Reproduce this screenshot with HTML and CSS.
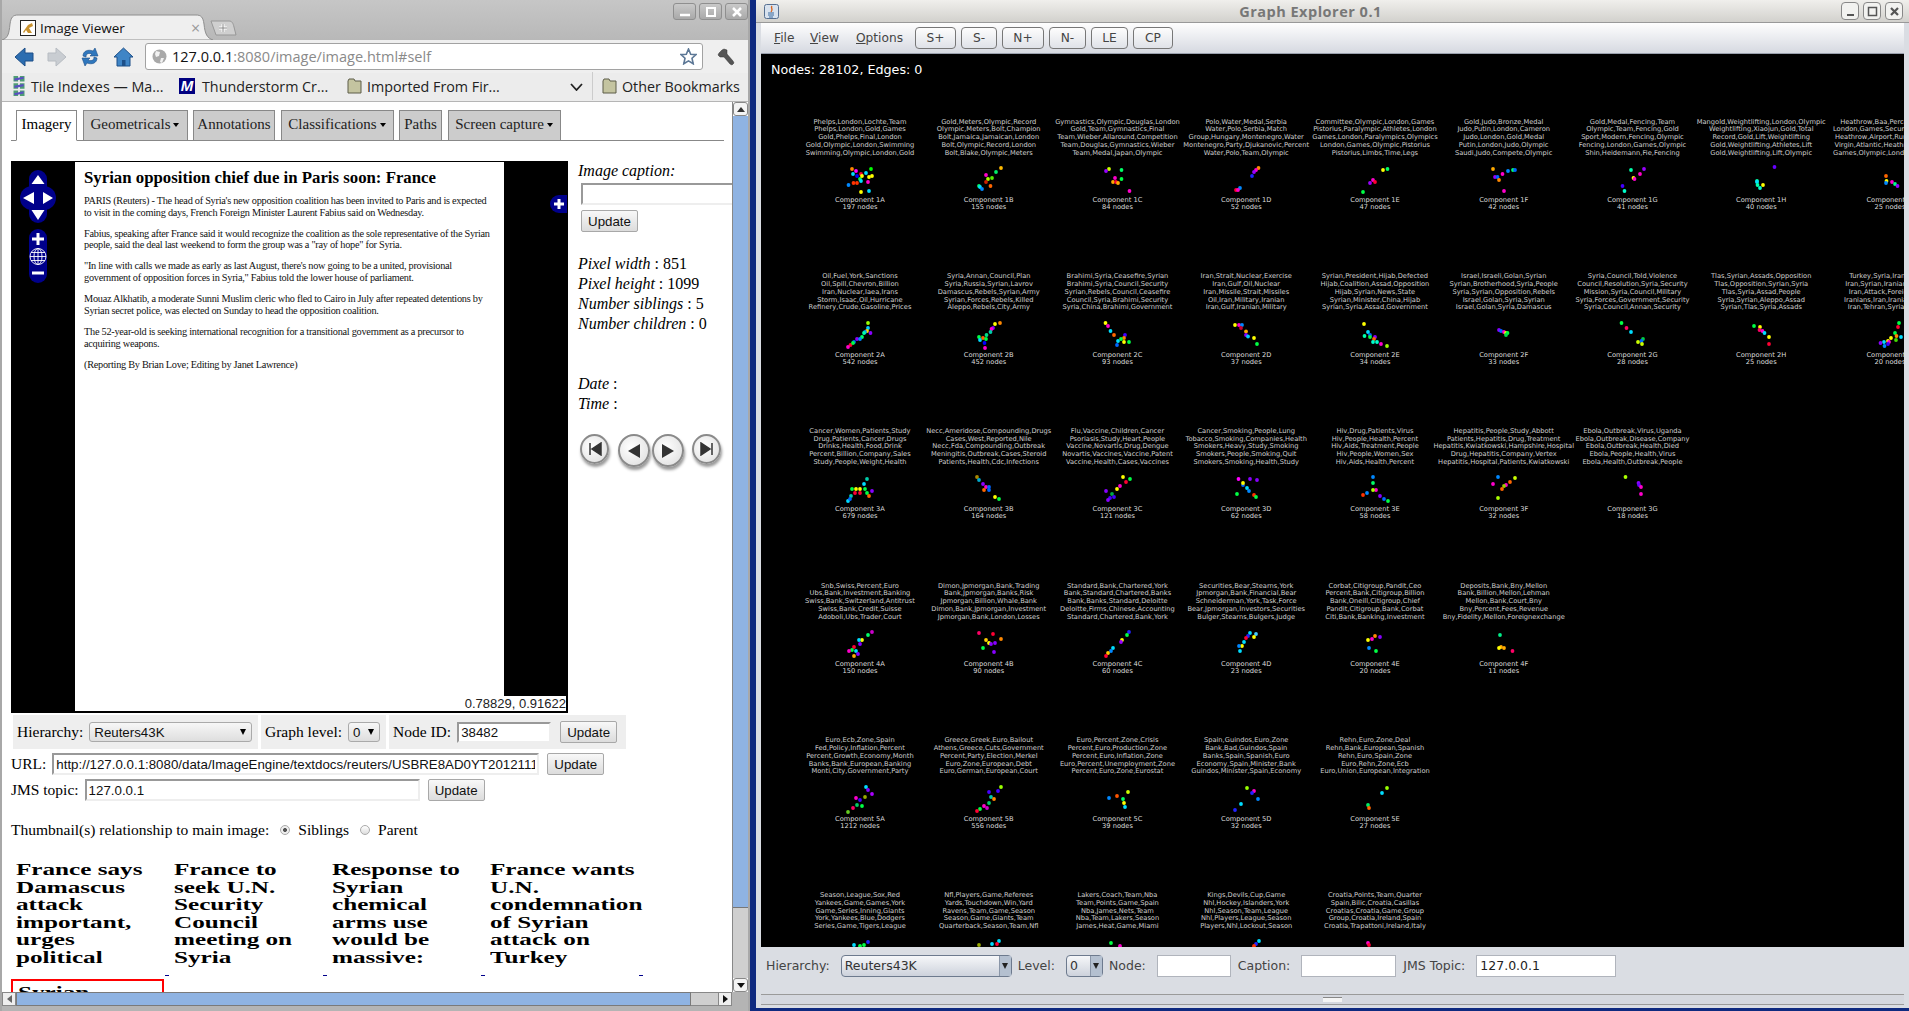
FILE: index.html
```html
<!DOCTYPE html>
<html lang="en">
<head>
    <meta charset="UTF-8">
    <title>Image Viewer / Graph Explorer</title>
    <link rel="stylesheet" href="styles.css">
</head>
<body>
    <!-- Browser window -->
    <div class="browser">
        <div class="tabstrip">
            <svg class="tab-shape" width="240" height="40" viewBox="0 0 240 40"><path d="M2 40C8 38 9 34 10 24C11 17 13 15 18 15H196C201 15 203 17 204 24C205 34 207 38 213 40Z" fill="#efefef" stroke="#8e8e8e"/><path d="M211 21H229C232 21 233 23 234 27L236 35H216Z" fill="#cfcfcf" stroke="#979797"/><path d="M223 24V32M219 28H227" stroke="#fff" stroke-width="3"/><path d="M223 24V32M219 28H227" stroke="#888" stroke-width="1"/></svg>
            <div class="tab-label">
                <svg width="16" height="16" viewBox="0 0 16 16"><rect x=".5" y=".5" width="15" height="15" fill="#fff" stroke="#222"/><path d="M3 12L8 5L12 3L13 6L9 8L12 13H8L6 10L4 13Z" fill="#c8912e"/></svg>
                <span>Image Viewer</span>
            </div>
            <span class="tab-close">×</span>
            <div class="win-buttons">
                <span class="win-btn"><svg width="12" height="12" viewBox="0 0 12 12"><path d="M1 9H11" stroke="#fff" stroke-width="2.5"/></svg></span>
                <span class="win-btn"><svg width="12" height="12" viewBox="0 0 12 12"><rect x="2" y="2" width="8" height="8" fill="none" stroke="#fff" stroke-width="2"/></svg></span>
                <span class="win-btn"><svg width="12" height="12" viewBox="0 0 12 12"><path d="M2 2L10 10M10 2L2 10" stroke="#fff" stroke-width="2.5"/></svg></span>
            </div>
        </div>
        <div class="toolbar">
            <svg class="tool-icon" width="20" height="20" viewBox="0 0 20 20"><path d="M1 10L11 1V6H19V14H11V19Z" fill="#2c6db0" stroke="#1d4f88"/></svg>
            <svg class="tool-icon" width="20" height="20" viewBox="0 0 20 20"><path d="M19 10L9 1V6H1V14H9V19Z" fill="#c9cdd2" stroke="#b7bcc2"/></svg>
            <svg class="tool-icon" width="20" height="20" viewBox="0 0 20 20"><path d="M3 9C3 4 8 2 13 4L15 1L18 9L10 9L12 7C9 6 6 6 6 10Z" fill="#2f77bd" stroke="#1d4f88" stroke-width=".6"/><path d="M17 11C17 16 12 18 7 16L5 19L2 11L10 11L8 13C11 14 14 14 14 10Z" fill="#2f77bd" stroke="#1d4f88" stroke-width=".6"/></svg>
            <svg class="tool-icon" width="21" height="20" viewBox="0 0 21 20"><path d="M10.500 1L20 10H17V19H4V10H1Z" fill="#3f85c6" stroke="#1d4f88"/><rect x="9" y="13" width="3.500" height="6" fill="#1d4f88"/></svg>
            <div class="urlbar">
                <svg width="15" height="15" viewBox="0 0 15 15"><circle cx="7.500" cy="7.500" r="7" fill="#a9a9a9"/><path d="M4 2L8 3L7 7L4 8L3 5ZM9 9L12 9L10 14L8 13Z" fill="#f2f2f2"/></svg>
                <span class="url-text"><b>127.0.0.1</b>:8080/image/image.html#self</span>
                <svg width="17" height="17" viewBox="0 0 17 17"><path d="M8.500 1L10.700 6.200L16 6.600L12 10.200L13.200 15.800L8.500 12.900L3.800 15.800L5 10.200L1 6.600L6.300 6.200Z" fill="#fff" stroke="#5d7896" stroke-width="1.600"/></svg>
            </div>
            <svg class="wrench" width="18" height="18" viewBox="0 0 18 18"><path d="M2 5L5 2L7 1L10 2L10 6L16 13L17 15L15 17L13 16L7 9L3 9L1 7Z" fill="#555" stroke="#333" stroke-width=".5"/></svg>
        </div>
        <div class="bookmarks">
            <span class="bookmark bookmark-tile">
                <svg width="14" height="24" viewBox="0 0 14 24"><path d="M1 1H6V7H1ZM8 1H13V7H8ZM1 9H6V15H1ZM8 9H13V15H8ZM1 17H6V23H1ZM8 17H13V23H8Z" fill="#4f9d74"/><path d="M2 5L12 3M2 13L12 11M2 21L12 19" stroke="#5a4fc2" stroke-width="2.500"/></svg>
                Tile Indexes — Ma...
            </span>
            <span class="bookmark bookmark-thunder"><i class="m-logo">M</i>Thunderstorm Cr...</span>
            <span class="bookmark bookmark-import">
                <svg class="folder" width="15" height="16" viewBox="0 0 15 16"><path d="M1 3V15H14V3H8L7 1H2Z" fill="#c4c4a0" stroke="#5c5c48"/></svg>
                Imported From Fir...
            </span>
            <svg class="chevron" width="13" height="8" viewBox="0 0 13 8"><path d="M1 1L6.500 7L12 1" fill="none" stroke="#222" stroke-width="1.800"/></svg>
            <span class="bookmark bookmark-other">
                <svg class="folder" width="15" height="16" viewBox="0 0 15 16"><path d="M1 3V15H14V3H8L7 1H2Z" fill="#c4c4a0" stroke="#5c5c48"/></svg>
                Other Bookmarks
            </span>
        </div>
        <div class="viewport">
            <div class="page">
                <div class="tabs">
                    <span class="tab tab-active tab-imagery">Imagery</span>
                    <span class="tab tab-geometricals">Geometricals<i class="caret"></i></span>
                    <span class="tab tab-annotations">Annotations</span>
                    <span class="tab tab-classifications">Classifications<i class="caret"></i></span>
                    <span class="tab tab-paths">Paths</span>
                    <span class="tab tab-capture">Screen capture<i class="caret"></i></span>
                </div>

                <div class="main-row">
                    <div class="image-pane">
                        <div class="article">
                            <h2>Syrian opposition chief due in Paris soon: France</h2>
                            <p>PARIS (Reuters) - The head of Syria's new opposition coalition has been invited to Paris and is expected<br>to visit in the coming days, French Foreign Minister Laurent Fabius said on Wednesday.</p>
                            <p>Fabius, speaking after France said it would recognize the coalition as the sole representative of the Syrian<br>people, said the deal last weekend to form the group was a "ray of hope" for Syria.</p>
                            <p>"In line with calls we made as early as last August, there's now going to be a united, provisional<br>government of opposition forces in Syria," Fabius told the lower house of parliament.</p>
                            <p>Mouaz Alkhatib, a moderate Sunni Muslim cleric who fled to Cairo in July after repeated detentions by<br>Syrian secret police, was elected on Sunday to head the opposition coalition.</p>
                            <p>The 52-year-old is seeking international recognition for a transitional government as a precursor to<br>acquiring weapons.</p>
                            <p>(Reporting By Brian Love; Editing by Janet Lawrence)</p>
                        </div>
                        <svg class="pan-control" width="36" height="113" viewBox="0 0 36 113">
                            <g fill="#00008b">
                                <rect x="9" y="0" width="18" height="53" rx="9"/>
                                <rect x="0" y="16" width="36" height="24" rx="12"/>
                                <rect x="9" y="59" width="18" height="54" rx="9"/>
                            </g>
                            <path d="M18 5L11.500 14H24.500ZM3 28L14 22V34ZM33 28L23 22V34ZM18 50L11.500 40H24.500Z" fill="#fff"/>
                            <path d="M12 69H24M18 63V75M12 103H24" stroke="#fff" stroke-width="3"/>
                            <g fill="none" stroke="#fff" stroke-width=".9">
                                <circle cx="18" cy="86.500" r="8"/>
                                <ellipse cx="18" cy="86.500" rx="4" ry="8"/>
                                <path d="M18 78.500V94.500M10 86.500H26M11 82.500H25M11 90.500H25"/>
                            </g>
                        </svg>
                        <span class="expand-btn"><svg width="12" height="12" viewBox="0 0 12 12"><path d="M1 6H11M6 1V11" stroke="#fff" stroke-width="3"/></svg></span>
                        <span class="coords">0.78829, 0.91622</span>
                    </div>
                    <div class="side">
                        <div class="side-line"><em>Image caption:</em></div>
                        <input class="field field-caption" type="text">
                        <button class="btn btn-caption">Update</button>
                        <div class="side-stats">
                            <div class="side-line"><em>Pixel width</em> : 851</div>
                            <div class="side-line"><em>Pixel height</em> : 1099</div>
                            <div class="side-line"><em>Number siblings</em> : 5</div>
                            <div class="side-line"><em>Number children</em> : 0</div>
                        </div>
                        <div class="side-dates">
                            <div class="side-line"><em>Date</em> :</div>
                            <div class="side-line"><em>Time</em> :</div>
                        </div>
                        <div class="nav-buttons">
                            <span class="round-btn"><svg width="14" height="14" viewBox="0 0 14 14"><path d="M2 1V13M13 1V13L4 7Z" fill="#333" stroke="#333" stroke-width="1.500"/></svg></span>
                            <span class="round-btn round-large round-prev"><svg width="14" height="14" viewBox="0 0 14 14"><path d="M13 0V14L1 7Z" fill="#333"/></svg></span>
                            <span class="round-btn round-large round-next"><svg width="14" height="14" viewBox="0 0 14 14"><path d="M1 0V14L13 7Z" fill="#333"/></svg></span>
                            <span class="round-btn round-last"><svg width="14" height="14" viewBox="0 0 14 14"><path d="M12 1V13M1 1V13L10 7Z" fill="#333" stroke="#333" stroke-width="1.500"/></svg></span>
                        </div>
                    </div>
                </div>

                <div class="control-row">
                    <div class="segment seg-hierarchy">
                        <label>Hierarchy:</label>
                        <span class="select select-wide">Reuters43K</span>
                    </div>
                    <div class="segment seg-level">
                        <label>Graph level:</label>
                        <span class="select select-small">0</span>
                    </div>
                    <div class="segment seg-node">
                        <label>Node ID:</label>
                        <input class="field field-node" type="text" value="38482">
                        <button class="btn">Update</button>
                    </div>
                </div>
                <div class="form-row">
                    <label>URL:</label>
                    <input class="field field-url" type="text" value="http://127.0.0.1:8080/data/ImageEngine/textdocs/reuters/USBRE8AD0YT20121114">
                    <button class="btn">Update</button>
                </div>
                <div class="form-row">
                    <label>JMS topic:</label>
                    <input class="field field-jms" type="text" value="127.0.0.1">
                    <button class="btn">Update</button>
                </div>
                <div class="relation">
                    <span>Thumbnail(s) relationship to main image:</span>
                    <i class="radio radio-on"></i><span>Siblings</span>
                    <i class="radio"></i><span>Parent</span>
                </div>

                <div class="thumbs">
                    <div class="thumb">
                        <div class="thumb-title">France says<br>Damascus<br>attack<br>important,<br>urges<br>political</div>
                        <i class="thumb-mark"></i>
                    </div>
                    <div class="thumb">
                        <div class="thumb-title">France to<br>seek U.N.<br>Security<br>Council<br>meeting on<br>Syria</div>
                        <i class="thumb-mark"></i>
                    </div>
                    <div class="thumb">
                        <div class="thumb-title">Response to<br>Syrian<br>chemical<br>arms use<br>would be<br>massive:</div>
                        <i class="thumb-mark"></i>
                    </div>
                    <div class="thumb">
                        <div class="thumb-title">France wants<br>U.N.<br>condemnation<br>of Syrian<br>attack on<br>Turkey</div>
                        <i class="thumb-mark"></i>
                    </div>
                </div>
                <div class="thumb-selected"><div class="thumb-title">Syrian</div></div>
            </div>
            <div class="vscroll">
                <span class="scroll-btn"><i class="arrow-up"></i></span>
                <span class="vscroll-thumb"></span>
                <span class="vscroll-rest"></span>
                <span class="scroll-btn"><i class="arrow-down"></i></span>
            </div>
        </div>
        <div class="hscroll">
            <span class="hscroll-btn"><i class="arrow-left"></i></span>
            <span class="hscroll-thumb"></span>
            <span class="hscroll-rest"></span>
            <span class="hscroll-btn"><i class="arrow-right"></i></span>
        </div>
    </div>

    <!-- Java window -->
    <div class="explorer">
        <div class="titlebar">
            <svg class="java-icon" width="15" height="15" viewBox="0 0 15 15"><rect x=".5" y=".5" width="14" height="14" rx="2" fill="#d8e2ee" stroke="#566f90"/><path d="M8 2C6 4 10 5 7 8" fill="none" stroke="#d9641e" stroke-width="1.400"/><path d="M4 9H10M4 11H10M5 13H9" stroke="#3b6aa0"/></svg>
            <span class="title-text">Graph Explorer 0.1</span>
            <div class="title-buttons">
                <span class="title-btn"><svg width="11" height="11" viewBox="0 0 11 11"><path d="M2 9H9" stroke="#555" stroke-width="2"/></svg></span>
                <span class="title-btn"><svg width="11" height="11" viewBox="0 0 11 11"><rect x="1.500" y="1.500" width="8" height="8" fill="none" stroke="#555" stroke-width="1.500"/></svg></span>
                <span class="title-btn"><svg width="11" height="11" viewBox="0 0 11 11"><path d="M2 2L9 9M9 2L2 9" stroke="#555" stroke-width="2.200"/></svg></span>
            </div>
        </div>
        <div class="menubar">
            <span class="menu-item menu-file"><u>F</u>ile</span>
            <span class="menu-item menu-view"><u>V</u>iew</span>
            <span class="menu-item menu-options"><u>O</u>ptions</span>
            <span class="tool-btn tool-splus">S+</span>
            <span class="tool-btn tool-sminus">S-</span>
            <span class="tool-btn tool-nplus">N+</span>
            <span class="tool-btn tool-nminus">N-</span>
            <span class="tool-btn tool-le">LE</span>
            <span class="tool-btn tool-cp">CP</span>
        </div>
        <div class="graph" id="graph">
            <div class="graph-status">Nodes: 28102, Edges: 0</div>
        </div>
        <div class="graph-panel">
            <span class="panel-label">Hierarchy:</span>
            <span class="combo combo-wide">Reuters43K<i class="combo-arrow"></i></span>
            <span class="panel-label">Level:</span>
            <span class="combo combo-small">0<i class="combo-arrow"></i></span>
            <span class="panel-label">Node:</span>
            <span class="panel-field panel-node"></span>
            <span class="panel-label">Caption:</span>
            <span class="panel-field panel-caption"></span>
            <span class="panel-label">JMS Topic:</span>
            <span class="panel-field panel-jms">127.0.0.1</span>
        </div>
        <div class="splitter"><i class="split-knob"></i></div>
    </div>

    <script src="graph.js"></script>
</body>
</html>
```

FILE: styles.css
```css
* {
    box-sizing: border-box;
}
html, body {
    margin: 0;
    padding: 0;
    height: 100%;
    overflow: hidden;
    background-color: #0f2a80;
}
body {
    font-family: "Liberation Serif", serif;
    color: #000;
}

/* Browser window */
.browser {
    position: absolute;
    left: 0;
    top: 0;
    width: 750px;
    height: 1011px;
    background-color: #b4b4b4;
    border-left: 2px solid #a8a8a8;
    border-right: 2px solid #a8a8a8;
    display: flex;
    flex-direction: column;
    font-family: "Open Sans", sans-serif;
}
.tabstrip {
    position: relative;
    height: 40px;
    flex: none;
    background: linear-gradient(#c6c6c6, #b8b8b8);
}
.tab-shape {
    position: absolute;
    left: -2px;
    top: 0;
}
.tab-label {
    position: absolute;
    left: 18px;
    top: 19px;
    display: flex;
    align-items: center;
    gap: 4px;
    font-size: 13.500px;
    color: #111;
}
.tab-close {
    position: absolute;
    left: 189px;
    top: 17px;
    font-size: 16px;
    color: #999;
}
.win-buttons {
    position: absolute;
    right: 0;
    top: 3px;
    display: flex;
    gap: 3px;
}
.win-btn {
    width: 23px;
    height: 17px;
    display: flex;
    align-items: center;
    justify-content: center;
    background: linear-gradient(#c9c9c9, #a9a9a9);
    border: 1px solid #8f8f8f;
    border-radius: 3px;
}
.toolbar {
    height: 33px;
    flex: none;
    background-color: #efefef;
    display: flex;
    align-items: center;
    padding-left: 12px;
}
.tool-icon {
    margin-right: 13px;
    flex: none;
}
.urlbar {
    width: 558px;
    height: 27px;
    margin-left: -2px;
    padding: 0 5px 0 6px;
    background-color: #fff;
    border: 1px solid #a2a2a2;
    border-radius: 3px;
    display: flex;
    align-items: center;
    gap: 5px;
}
.url-text {
    flex: 1;
    font-size: 14.500px;
    color: #8a8a8a;
}
.url-text b {
    font-weight: normal;
    color: #111;
}
.wrench {
    margin-left: 14px;
}
.bookmarks {
    position: relative;
    height: 29px;
    flex: none;
    background-color: #ececec;
    border-bottom: 1px solid #b5b5b5;
    display: flex;
    align-items: center;
    font-size: 14.300px;
    color: #222;
}
.bookmark {
    position: absolute;
    top: 2px;
    height: 22px;
    display: flex;
    align-items: center;
    gap: 5px;
    white-space: nowrap;
}
.bookmark-tile {
    left: 10px;
}
.bookmark-tile svg {
    height: 22px;
}
.bookmark-thunder {
    left: 177px;
    gap: 7px;
}
.m-logo {
    width: 16px;
    height: 16px;
    background-color: #000080;
    color: #fff;
    font: italic bold 15px "Liberation Sans", sans-serif;
    text-align: center;
    line-height: 16px;
}
.bookmark-import {
    left: 345px;
}
.chevron {
    position: absolute;
    left: 568px;
    top: 10px;
}
.bookmark-other {
    left: 598px;
    padding-left: 0;
}
.bookmark-other::before {
    content: "";
    width: 1px;
    height: 28px;
    background-color: #ccc;
    margin-right: 4px;
    margin-left: -8px;
}
.viewport {
    flex: none;
    height: 890px;
    display: flex;
    background-color: #fff;
}
.page {
    position: relative;
    width: 730px;
    height: 890px;
    padding: 8px 0 0 9px;
    overflow: hidden;
    background-color: #fff;
    font-family: "Liberation Serif", serif;
    font-size: 15.500px;
}

/* Tabs */
.tabs {
    display: flex;
    gap: 5.500px;
    height: 31px;
    width: 713px;
    padding-left: 5px;
    border-bottom: 1px solid #888;
}
.tab {
    height: 31px;
    padding-top: 5px;
    text-align: center;
    background-color: #ccc;
    border: 1px solid #888;
    font-size: 15px;
    white-space: nowrap;
    color: #222;
}
.tab-active {
    background-color: #fff;
    border-bottom-color: #fff;
    color: #000;
}
.tab-imagery {
    width: 61px;
}
.tab-geometricals {
    width: 105px;
}
.tab-annotations {
    width: 82px;
}
.tab-classifications {
    width: 113px;
}
.tab-paths {
    width: 43px;
}
.tab-capture {
    width: 113px;
}
.caret {
    display: inline-block;
    margin-left: 3px;
    vertical-align: 2px;
    border-left: 3.500px solid transparent;
    border-right: 3.500px solid transparent;
    border-top: 4px solid #000;
}

/* Main image */
.main-row {
    display: flex;
    margin-top: 20px;
}
.image-pane {
    position: relative;
    width: 557px;
    height: 552px;
    flex: none;
    background-color: #000;
    padding: 1px 64px 2px 64px;
}
.article {
    width: 429px;
    height: 549px;
    background-color: #fff;
    padding: 0 0 0 9px;
    font-size: 10.300px;
    letter-spacing: -.27px;
    line-height: 11.700px;
    white-space: nowrap;
    overflow: hidden;
    color: #111;
}
.article h2 {
    margin: 0;
    padding-top: 5px;
    height: 33px;
    font-size: 16.800px;
    letter-spacing: 0;
    line-height: 21px;
    font-weight: bold;
    white-space: nowrap;
    color: #000;
}
.article p {
    margin: 0 0 9.300px;
}
.pan-control {
    position: absolute;
    left: 9px;
    top: 9px;
}
.expand-btn {
    position: absolute;
    right: 1px;
    top: 34px;
    width: 17px;
    height: 18px;
    display: flex;
    align-items: center;
    justify-content: center;
    background-color: #00008b;
    border-radius: 9px 0 0 9px;
}
.coords {
    position: absolute;
    right: 2px;
    bottom: 2px;
    width: 62px;
    height: 15px;
    background-color: #fff;
    font: 13px/16px "Liberation Sans", sans-serif;
    white-space: nowrap;
    display: flex;
    justify-content: flex-end;
    color: #222;
}
.side {
    margin-left: 10px;
    flex: none;
    width: 170px;
}
.side-line {
    height: 20px;
    line-height: 20px;
    font-size: 16px;
    white-space: nowrap;
}
.field {
    display: block;
    height: 22px;
    padding: 0 2px;
    background-color: #fff;
    border-width: 2px;
    border-style: solid;
    border-color: #999 #eee #eee #999;
    font: 13.300px "Liberation Sans", sans-serif;
    color: #111;
}
.field-caption {
    width: 160px;
    margin: 2px 0 5px 3px;
}
.btn {
    height: 22px;
    width: 57px;
    padding: 0;
    background: linear-gradient(#f8f8f8, #dcdcdc);
    border: 1px solid #a8a8a8;
    border-radius: 2px;
    font: 13.300px "Liberation Sans", sans-serif;
    color: #111;
}
.btn-caption {
    display: block;
    margin-left: 3px;
}
.side-stats {
    margin-top: 22px;
}
.side-dates {
    margin-top: 40px;
}
.nav-buttons {
    display: flex;
    align-items: flex-start;
    margin: 20px 0 0 2px;
}
.round-btn {
    width: 29px;
    height: 30px;
    display: flex;
    align-items: center;
    justify-content: center;
    border-radius: 50%;
    border: 2px solid #8a8a8a;
    background: radial-gradient(circle at 40% 40%, #fff, #dcdcdc);
    box-shadow: 1px 3px 3px #999;
}
.round-large {
    width: 32px;
    height: 33px;
}
.round-prev {
    margin-left: 9px;
}
.round-next {
    margin-left: 2px;
}
.round-last {
    margin-left: 8px;
}

/* Forms below the image */
.control-row {
    display: flex;
    gap: 3px;
    margin: 2px 0 0 2px;
    height: 34px;
}
.segment {
    display: flex;
    align-items: center;
    background-color: #eee;
    padding-left: 4px;
}
.seg-hierarchy {
    width: 245px;
}
.seg-level {
    width: 125px;
}
.seg-node {
    width: 237px;
}
.segment label {
    margin-right: 6px;
}
.select {
    position: relative;
    display: block;
    height: 20px;
    padding-left: 4px;
    background: linear-gradient(#f7f7f7, #dedede);
    border: 1px solid #aaa;
    border-radius: 3px;
    font: 13.300px/19px "Liberation Sans", sans-serif;
    color: #111;
}
.select::after {
    content: "";
    position: absolute;
    right: 5px;
    top: 6px;
    border-left: 3.500px solid transparent;
    border-right: 3.500px solid transparent;
    border-top: 6px solid #000;
}
.select-wide {
    width: 163px;
}
.select-small {
    width: 32px;
}
.field-node {
    width: 94px;
    margin-right: 9px;
    height: 21px;
}
.form-row {
    display: flex;
    align-items: center;
    height: 22px;
    margin-top: 4px;
}
.form-row label {
    margin-right: 6px;
}
.field-url {
    width: 487px;
    margin-right: 8px;
    overflow: hidden;
}
.field-jms {
    width: 335px;
    margin-right: 8px;
}
.relation {
    display: flex;
    align-items: center;
    margin-top: 19px;
    height: 20px;
}
.radio {
    width: 10px;
    height: 10px;
    margin: 0 8px 0 11px;
    border-radius: 50%;
    border: 1px solid #aaa;
    background: linear-gradient(#fff, #ddd);
}
.radio-on {
    background: radial-gradient(circle, #555 30%, #eee 40%);
}
.thumbs {
    display: flex;
    margin-top: 21px;
}
.thumb {
    width: 158px;
    display: flex;
    flex-direction: column;
}
.thumb-title {
    width: 100px;
    padding-left: 0;
    margin-left: 5px;
    font-size: 17px;
    line-height: 17.600px;
    font-weight: bold;
    white-space: nowrap;
    transform: scaleX(1.480);
    transform-origin: left top;
}
.thumb-mark {
    align-self: flex-end;
    width: 4px;
    height: 1px;
    margin-top: 8px;
    background-color: #00008b;
}
.thumb-selected {
    width: 153px;
    height: 40px;
    margin-top: 3px;
    padding-top: 3px;
    border: 2px solid #f00;
}

/* Scrollbars */
.vscroll {
    width: 16px;
    flex: none;
    display: flex;
    flex-direction: column;
    background-color: #fff;
    border-left: 1px solid #888;
}
.scroll-btn {
    height: 14px;
    flex: none;
    display: flex;
    align-items: center;
    justify-content: center;
    background: #f4f4f4;
    border: 1px solid #888;
    border-radius: 3px;
}
.vscroll-thumb {
    height: 792px;
    background-color: #8fb3e2;
    border-bottom: 1px solid #777;
}
.vscroll-rest {
    flex: 1;
    background-color: #cfcfcf;
}
.arrow-up {
    border-left: 4px solid transparent;
    border-right: 4px solid transparent;
    border-bottom: 5px solid #333;
}
.arrow-down {
    border-left: 4px solid transparent;
    border-right: 4px solid transparent;
    border-top: 5px solid #111;
}
.arrow-left {
    border-top: 4px solid transparent;
    border-bottom: 4px solid transparent;
    border-right: 5px solid #666;
}
.arrow-right {
    border-top: 4px solid transparent;
    border-bottom: 4px solid transparent;
    border-left: 5px solid #111;
}
.hscroll {
    height: 14px;
    flex: none;
    width: 730px;
    display: flex;
    background-color: #fff;
}
.hscroll-btn {
    width: 14px;
    flex: none;
    display: flex;
    align-items: center;
    justify-content: center;
    background: #eee;
    border: 1px solid #888;
}
.hscroll-thumb {
    width: 675px;
    background-color: #8fb3e2;
    border: 1px solid #7a7a7a;
}
.hscroll-rest {
    flex: 1;
    background-color: #cfcfcf;
    border-top: 1px solid #888;
    border-bottom: 1px solid #888;
}

/* Explorer window */
.explorer {
    position: absolute;
    left: 756px;
    top: 0;
    width: 1153px;
    height: 1008px;
    background-color: #dadde3;
    display: flex;
    flex-direction: column;
    font-family: "DejaVu Sans", sans-serif;
    padding: 0 5px 0 5px;
}
.titlebar {
    position: relative;
    height: 23px;
    flex: none;
    margin: 0 -5px;
    padding-right: 44px;
    background: linear-gradient(#f0efec, #d2d1cd);
    border-bottom: 1px solid #999;
    text-align: center;
}
.java-icon {
    position: absolute;
    left: 8px;
    top: 4px;
}
.title-text {
    font: bold 14.500px/23px "Open Sans", sans-serif;
    color: #777;
    letter-spacing: .5px;
}
.title-buttons {
    position: absolute;
    right: 6px;
    top: 2px;
    display: flex;
    gap: 4px;
}
.title-btn {
    width: 18px;
    height: 18px;
    display: flex;
    align-items: center;
    justify-content: center;
    background-color: #f2f2f0;
    border: 1px solid #888;
    border-radius: 4px;
}
.menubar {
    height: 31px;
    flex: none;
    display: flex;
    align-items: center;
    padding-left: 13px;
    background: linear-gradient(#fefefe, #d6d9e1);
    border-bottom: 1px solid #9aa0ad;
    font-size: 12.200px;
    color: #444;
}
.menu-item {
    white-space: nowrap;
}
.menu-file {
    width: 36px;
}
.menu-view {
    width: 46px;
}
.menu-options {
    width: 59px;
}
.tool-btn {
    height: 22px;
    line-height: 20px;
    text-align: center;
    background: linear-gradient(#fdfdfd, #dfe2e8);
    border: 1px solid #777;
    border-radius: 4px;
    margin-right: 5px;
}
.tool-splus {
    width: 41px;
}
.tool-sminus {
    width: 36px;
}
.tool-nplus {
    width: 42px;
}
.tool-nminus {
    width: 37px;
}
.tool-le {
    width: 37px;
}
.tool-cp {
    width: 40px;
}
.graph {
    position: relative;
    flex: none;
    height: 893px;
    overflow: hidden;
    background-color: #000;
    padding: 64.500px 0 0 34.600px;
    color: #d0d0d0;
}
.graph-status {
    position: absolute;
    left: 10px;
    top: 8px;
    font-size: 12.700px;
    color: #fff;
}
.graph-row {
    display: flex;
    height: 154.700px;
}
.graph-cell {
    width: 128.750px;
    flex: none;
    text-align: center;
    white-space: nowrap;
    display: flex;
    flex-direction: column;
    align-items: center;
}
.cell-words {
    font-size: 6.700px;
    line-height: 7.800px;
    height: 39px;
}
.cell-plot {
    display: block;
    margin: 4.500px 0 1.500px;
    flex: none;
}
.cell-name {
    margin-top: 0;
    font-size: 6.700px;
    line-height: 7px;
    color: #dcdcdc;
}
.graph-panel {
    height: 47px;
    flex: none;
    display: flex;
    align-items: flex-start;
    padding: 8px 0 0 5px;
    font-size: 12.500px;
    color: #333;
}
.panel-label {
    margin-top: 3px;
    margin-right: 11px;
    white-space: nowrap;
    color: #444;
}
.combo {
    position: relative;
    height: 22px;
    line-height: 20px;
    padding-left: 3px;
    margin-right: 6px;
    background: linear-gradient(#f6f7f9, #cdd2dc);
    border: 1px solid #6d7a8e;
    border-radius: 4px;
}
.combo-wide {
    width: 171px;
}
.combo-small {
    width: 37px;
}
.combo-arrow {
    position: absolute;
    right: 0;
    top: 0;
    bottom: 0;
    width: 12px;
    background-color: #b4c0d0;
    border-left: 1px solid #8a96a8;
}
.combo-arrow::after {
    content: "";
    position: absolute;
    left: 2px;
    top: 7px;
    border-left: 3.500px solid transparent;
    border-right: 3.500px solid transparent;
    border-top: 6px solid #222;
}
.panel-field {
    height: 22px;
    line-height: 20px;
    padding-left: 3px;
    margin-right: 7px;
    background-color: #fff;
    border: 1px solid #b0b4bc;
    color: #222;
}
.panel-node {
    width: 74px;
}
.panel-caption {
    width: 95px;
}
.panel-jms {
    width: 140px;
}
.splitter {
    position: relative;
    flex: 1;
    margin: 0;
    border-top: 1px solid #9a9a9a;
    border-bottom: 1px solid #9a9a9a;
    margin-bottom: 3px;
    background-color: #d5d8df;
}
.split-knob {
    position: absolute;
    left: 562px;
    top: 2px;
    width: 19px;
    height: 5px;
    background-color: #f4f4f4;
    border-top: 1px solid #888;
}
```

FILE: graph.js
```js
// Components per row: [name, nodes, keywords split by "/", dots "x y colour"]
const rows = [
    [
        ['1A', 197, 'Phelps,London,Lochte,Team/Phelps,London,Gold,Games/Gold,Phelps,Final,London/Gold,Olympic,London,Swimming/Swimming,Olympic,London,Gold', '-11.5 23 08f,-8 7 f80,-4 9 f0f,-7 12 0df,-3 14 00f,1 12 f03,6 11 0df,11 7 0f0,12 14 ff0,9 15 ff0,8 20 f0c,1 30 ff0,9 29 0df,-6.5 21 f30,-3 21 f30,0 17 0f4,1 19 0df,2 14 ff0'],
        ['1B', 155, 'Gold,Meters,Olympic,Record/Olympic,Meters,Bolt,Champion/Bolt,Jamaica,Jamaican,London/Bolt,Olympic,Record,London/Bolt,Blake,Olympic,Meters', '12 6 fb0,7 10 0e6,-3 13 f0c,3 16 5e0,-1 17 af0,-3 20 c20,1.5 24 f60,-10 24 0f6,-9 25 0df,-7 27 08f'],
        ['1C', 84, 'Gymnastics,Olympic,Douglas,London/Gold,Team,Gymnastics,Final/Team,Wieber,Allaround,Competition/Team,Douglas,Gymnastics,Wieber/Team,Medal,Japan,Olympic', '-8 7 cf0,-11 9 90f,4.500 8 0f6,4.500 17 0f4,-2 16 f0c,-4 20 fa0,-1 20 f03,1 21 fa0,12.500 29 f0c'],
        ['1D', 52, 'Polo,Water,Medal,Serbia/Water,Polo,Serbia,Match/Group,Hungary,Montenegro,Water/Montenegro,Party,Djukanovic,Percent/Water,Polo,Team,Olympic', '12.500 6 f80,10 8 f0c,8 10 90f,6 14 22f,-6 26 08f,-10 28 f03,-8 28 f0c'],
        ['1E', 47, 'Committee,Olympic,London,Games/Pistorius,Paralympic,Athletes,London/Games,London,Paralympics,Olympics/London,Games,Olympic,Pistorius/Pistorius,Limbs,Time,Legs', '8 8 ff0,12.500 7 0f6,-2 18 f0c,0 20 f03,-5 21 90f,-12 30 0f4'],
        ['1F', 42, 'Gold,Judo,Bronze,Medal/Judo,Putin,London,Cameron/Judo,London,Gold,Medal/Putin,London,Judo,Olympic/Saudi,Judo,Compete,Olympic', '-11 7 fa0,-1.5 12 f0c,-9 15 90f,-6.5 15 06f,-5 18 f80,4 9 08f,9 8 0f6,11 8 06f,0 29 f0c'],
        ['1G', 41, 'Gold,Medal,Fencing,Team/Olympic,Team,Fencing,Gold/Sport,Modern,Fencing,Olympic/Fencing,London,Games,Olympic/Shin,Heidemann,Fie,Fencing', '-1 8 0fa,12 7 90f,8 12 f0c,1.5 16 ff0,2.500 17 f0c,-9.500 24 40f,-7.500 29 0fc'],
        ['1H', 40, 'Mangold,Weightlifting,London,Olympic/Weightlifting,Xiaojun,Gold,Total/Record,Gold,Lift,Weightlifting/Gold,Weightlifting,Athletes,Lift/Gold,Weightlifting,Lift,Olympic', '13.500 5 60f,-4 19 0fa,-4 20 0df,-3.500 23 0fa,-1 26 0fc,2 23 ff0'],
        ['1I', 25, 'Heathrow,Baa,Percent,Airport/London,Games,Security,Heathrow/Heathrow,Airport,Runway,Flights/Virgin,Atlantic,Heathrow,Branson/Games,Olympic,London,Heathrow', '-4 14 f60,-3.500 19 ff0,-4 21 08f,2 20 f0c,5 22 0f8,7.500 24 90f']
    ],
    [
        ['2A', 542, 'Oil,Fuel,York,Sanctions/Oil,Spill,Chevron,Billion/Iran,Nuclear,Iaea,Irans/Storm,Isaac,Oil,Hurricane/Refinery,Crude,Gasoline,Prices', '8 6 9f0,8 11 0cf,7 14 fd0,5 15 08f,10.500 16 80f,2 20 0f6,-3 22 80f,-6 25 06f,-9.500 28 f03,-12 30 f0c,-7 26 0f4,0 22 08f,4 16 0fa'],
        ['2B', 452, 'Syria,Annan,Council,Plan/Syria,Russia,Syrian,Lavrov/Damascus,Rebels,Syrian,Army/Syrian,Forces,Rebels,Killed/Aleppo,Rebels,City,Army', '11 6 f80,6 7 ff0,4 11 80f,2.500 12 f0c,1.5 15 0ca,-2.500 18 0d8,-6 21 f60,-10 20 0f4,-9 23 0df,-4.500 26 00f,-4 31 f0c,-3 22 0f4'],
        ['2C', 93, 'Brahimi,Syria,Ceasefire,Syrian/Brahimi,Syria,Council,Security/Syrian,Rebels,Council,Ceasefire/Council,Syria,Brahimi,Security/Syria,China,Brahimi,Government', '-11.500 6 ff0,-9 9 f0c,-6.500 14 0df,-3 18 f60,8 18 40f,7 21 f80,1 24 0df,7 25 ff0,12 25 0f4,0 28 06f,4 22 0f4'],
        ['2D', 37, 'Iran,Strait,Nuclear,Exercise/Iran,Gulf,Oil,Nuclear/Iran,Missile,Strait,Missiles/Oil,Iran,Military,Iranian/Iran,Gulf,Iranian,Military', '-11 8 ff0,-7 8 f0c,-4 8 08f,-5 11 c03,0 14.500 fa0,0 18 80f,2 19.500 0cf,8 21 ff0,11 27 0f4'],
        ['2E', 34, 'Syrian,President,Hijab,Defected/Hijab,Coalition,Assad,Opposition/Hijab,Syrian,News,State/Syrian,Minister,China,Hijab/Syrian,Syria,Assad,Government', '-11 7 ff0,-7 15 0df,-5 18 06f,-10.500 19 0fa,-5 20 0f4,0 20 80f,-1 22 f60,-2 25 0fc,2 25 0fc,6 27 f0c,12 29 9f0'],
        ['2F', 33, 'Israel,Israeli,Golan,Syrian/Syrian,Brotherhood,Syria,People/Syria,Syrian,Opposition,Rebels/Israel,Golan,Syria,Syrian/Israel,Golan,Syria,Damascus', '-5 13 80f,-3 14 06f,0 15 f0c,2 16 ff0,3.500 16 0f4,2 18 0d4'],
        ['2G', 28, 'Syria,Council,Told,Violence/Council,Resolution,Syria,Security/Mission,Syria,Council,Military/Syria,Forces,Government,Security/Syria,Council,Annan,Security', '-10.500 6 0f4,-5.500 11 f06,-1 15 0df,11 22 0c4,9.500 24 06f,6 25 cf0,10 27 cf0'],
        ['2H', 25, 'Tlas,Syrian,Assads,Opposition/Tlas,Opposition,Syrian,Syria/Tlas,Syria,Assad,People/Syria,Syrian,Aleppo,Assad/Syrian,Tlas,Syria,Assads', '-7 9 0f4,-1 10 ff0,-1.500 13 f06,1.500 14 f0c,3.500 16 0df,8 20 ff0,8 27 f03'],
        ['2I', 20, 'Turkey,Syria,Iranian,Iran/Iran,Syrian,Iranian,Nuclear/Iran,Attack,Foreign,Syria/Iranians,Iran,Iranian,Tehran/Iran,Tehran,Syria,Nuclear', '9 6 0f4,8 10 f03,5 16 0f4,6.500 19 f80,11 20 0df,1 21 ff0,-2 24 ff0,-1 25 f0c,-6 25 0df,-9.500 26 80f,-2 27 40f,-5.500 29 08f,6 23 4d0']
    ],
    [
        ['3A', 679, 'Cancer,Women,Patients,Study/Drug,Patients,Cancer,Drugs/Drinks,Health,Food,Drink/Percent,Billion,Company,Sales/Study,People,Weight,Health', '7 8 0ca,4 13 0df,0 18 ff0,-8 18 0f4,-5 22 f03,0 22 f03,7 22 0f4,12 20 80f,9 25 f60,-9 25 0ca,-12 30 0df,-10 28 06f,5 18 0f4,-4 18 ff0'],
        ['3B', 164, 'Necc,Ameridose,Compounding,Drugs/Cases,West,Reported,Nile/Necc,Fda,Compounding,Outbreak/Meningitis,Outbreak,Cases,Steroid/Patients,Health,Cdc,Infections', '-12 6 a80,-10 9 0ac,-6 13 80f,-3 16 f0c,-5 19 f60,0 19 06f,0 16 06f,6 26 ff0,10 28 0f4'],
        ['3C', 121, 'Flu,Vaccine,Children,Cancer/Psoriasis,Study,Heart,People/Vaccine,Novartis,Drug,Dengue/Novartis,Vaccines,Vaccine,Patent/Vaccine,Health,Cases,Vaccines', '6 6 ff0,13 8 0f4,9 11 f03,3 15 f0c,0 18 ff0,-5 23 0a4,-11 20 80f,-7 27 40f,-9 29 80f,-3 26 40f'],
        ['3D', 62, 'Cancer,Smoking,People,Lung/Tobacco,Smoking,Companies,Health/Smokers,Heavy,Study,Smoking/Smokers,People,Smoking,Quit/Smokers,Smoking,Health,Study', '-7.500 8 f0f,4 8 80f,11 9 80f,-3 14 06f,-3 12 ff0,1 17 0df,3 20 08f,-9 23 0f4,8 24 f30,10 26 0f4'],
        ['3E', 58, 'Hiv,Drug,Patients,Virus/Hiv,People,Health,Percent/Hiv,Aids,Treatment,People/Hiv,People,Women,Sex/Hiv,Aids,Health,Percent', '-2 6 08f,-2 12 0f6,1 19 f0c,-2 19 af0,-12 24 f30,-8 22 08f,5 25 80f,9 28 06f,13 30 0f4'],
        ['3F', 32, 'Hepatitis,People,Study,Abbott/Patients,Hepatitis,Drug,Treatment/Hepatitis,Kwiatkowski,Hampshire,Hospital/Drug,Hepatitis,Company,Vertex/Hepatitis,Hospital,Patients,Kwiatkowski', '-6 6 08f,11 7 cf0,-11 13 f0c,6 11 f60,2 14 f0c,0 15 9c0,-2 18 f60,-6 27 af0'],
        ['3G', 18, 'Ebola,Outbreak,Virus,Uganda/Ebola,Outbreak,Disease,Company/Ebola,Outbreak,Health,Died/Ebola,People,Health,Virus/Ebola,Health,Outbreak,People', '-6.500 6 af0,6.500 12 80f,7 14 60f,9 16 f0c,9 23 f0c']
    ],
    [
        ['4A', 150, 'Snb,Swiss,Percent,Euro/Ubs,Bank,Investment,Banking/Swiss,Bank,Switzerland,Antitrust/Swiss,Bank,Credit,Suisse/Adoboli,Ubs,Trader,Court', '12 6 c0c,8 9 0f6,2 14 ff0,-1 14 0df,0 18 80f,-6 21 f03,-8 24 0f4,-4 25 0df,-11 25 f0c,-2 28 80f,-6 30 fa0'],
        ['4B', 90, 'Dimon,Jpmorgan,Bank,Trading/Bank,Jpmorgan,Banks,Risk/Jpmorgan,Billion,Whale,Bank/Dimon,Bank,Jpmorgan,Investment/Jpmorgan,Bank,London,Losses', '-10 7 f06,4 8 f03,12 13 f80,-3 14 fc0,0 17 ff0,2 18 80f,6 17 80f,-6 22 0f4,5 26 80f'],
        ['4C', 60, 'Standard,Bank,Chartered,York/Bank,Standard,Chartered,Banks/Bank,Banks,Standard,Deloitte/Deloitte,Firms,Chinese,Accounting/Standard,Chartered,Bank,York', '12 6 22f,10 9 0f4,5 14 ff0,4 16 90f,-4 22 0df,-6 25 08f,-9 27 fc0,-11 30 f03'],
        ['4D', 23, 'Securities,Bear,Stearns,York/Jpmorgan,Bank,Financial,Bear/Schneiderman,York,Task,Force/Bear,Jpmorgan,Investors,Securities/Bulger,Stearns,Bulgers,Judge', '4 7 0df,10 8 4cf,2 10 22f,8 11 ff0,0 12 f03,-2 16 0df,-4 20 ff0,-7 20 08f,-6 25 0df'],
        ['4E', 20, 'Corbat,Citigroup,Pandit,Ceo/Percent,Bank,Citigroup,Billion/Bank,Oneill,Citigroup,Chief/Pandit,Citigroup,Bank,Corbat/Citi,Bank,Banking,Investment', '0 10 f80,5 11 80f,-3 13 f0c,-7 14 ff0,-6 22 08f,1 25 0f4'],
        ['4F', 11, 'Deposits,Bank,Bny,Mellon/Bank,Billion,Mellon,Lehman/Mellon,Bank,Court,Bny/Bny,Percent,Fees,Revenue/Bny,Fidelity,Mellon,Foreignexchange', '-4 9 0e8,-3 21 fa0,-5 22 ff0,0 22 fa0,8.500 25 f06']
    ],
    [
        ['5A', 1212, 'Euro,Ecb,Zone,Spain/Fed,Policy,Inflation,Percent/Percent,Growth,Economy,Month/Banks,Bank,European,Banking/Monti,City,Government,Party', '6 6 0df,8 9 80f,12 13 a0f,5 16 9a0,-4 17 f0c,0 19 40f,-3 24 0c6,2 25 0f4,-7 27 f06,-12 31 6c2'],
        ['5B', 556, 'Greece,Greek,Euro,Bailout/Athens,Greece,Cuts,Government/Percent,Party,Election,Merkel/Euro,Zone,European,Debt/Euro,German,European,Court', '12 6 9f0,9 10 40f,0 11 40f,2 16 0ca,5 18 f80,0 22 0c6,-5 25 f0c,-2 27 c0c,-9 28 0f4,-12 30 f03'],
        ['5C', 39, 'Euro,Percent,Zone,Crisis/Percent,Euro,Production,Zone/Percent,Euro,Inflation,Zone/Euro,Percent,Unemployment,Zone/Percent,Euro,Zone,Eurostat', '11 11 cf0,0 15 f50,-8 17 08f,6 18 0f6,7 22 ff0,8 26 0df'],
        ['5D', 32, 'Spain,Guindos,Euro,Zone/Bank,Bad,Guindos,Spain/Banks,Spain,Spanish,Euro/Economy,Spain,Minister,Bank/Guindos,Minister,Spain,Economy', '1 7 9f0,8 10 f0c,6 12 22f,12 18 08f,-5 23 0df,-11 29 22f'],
        ['5E', 27, 'Rehn,Euro,Zone,Deal/Rehn,Bank,European,Spanish/Rehn,Euro,Spain,Zone/Euro,Rehn,Zone,Ecb/Euro,Union,European,Integration', '12 7 9f0,7 12 0df,-7 24 0e6,-6 27 f60']
    ],
    [
        ['6A', 0, 'Season,League,Sox,Red/Yankees,Game,Games,York/Game,Series,Inning,Giants/York,Yankees,Blue,Dodgers/Series,Game,Tigers,League', '8 7 22f,4 10 0f4,-6 10 0df,0 11 0f4'],
        ['6B', 0, 'Nfl,Players,Game,Referees/Yards,Touchdown,Win,Yard/Ravens,Team,Game,Season/Season,Game,Giants,Team/Quarterback,Season,Team,Nfl', '10 6 0df,3 9 0df,-10 10 9a0,8 9 f03'],
        ['6C', 0, 'Lakers,Coach,Team,Nba/Team,Points,Game,Spain/Nba,James,Nets,Team/Nba,Team,Lakers,Season/James,Heat,Game,Miami', '-6 8 0f4,3 11 f0c'],
        ['6D', 0, 'Kings,Devils,Cup,Game/Nhl,Hockey,Islanders,York/Nhl,Season,Team,League/Nhl,Players,League,Season/Players,Nhl,Lockout,Season', '13 6 0df,10 9 22f,8 11 f30'],
        ['6E', 0, 'Croatia,Points,Team,Quarter/Spain,Bilic,Croatia,Casillas/Croatias,Croatia,Game,Group/Group,Croatia,Ireland,Spain/Croatia,Trapattoni,Ireland,Italy', '-7 8 f0c,-6 10 f03']
    ]
];

const SVG_NS = 'http://www.w3.org/2000/svg';

function makePlot(dots) {
    const svg = document.createElementNS(SVG_NS, 'svg');
    svg.setAttribute('class', 'cell-plot');
    svg.setAttribute('width', '60');
    svg.setAttribute('height', '33.5');
    svg.setAttribute('viewBox', '-30 0 60 33.5');
    svg.style.overflow = 'visible';
    dots.split(',').forEach(function(dot) {
        const parts = dot.split(' ');
        const circle = document.createElementNS(SVG_NS, 'circle');
        circle.setAttribute('cx', parts[0]);
        circle.setAttribute('cy', parts[1]);
        circle.setAttribute('r', '1.9');
        circle.setAttribute('fill', '#' + parts[2]);
        svg.appendChild(circle);
    });
    return svg;
}

function makeCell(item) {
    const cell = document.createElement('div');
    cell.className = 'graph-cell';

    const words = document.createElement('div');
    words.className = 'cell-words';
    item[2].split('/').forEach(function(line) {
        const row = document.createElement('div');
        row.textContent = line;
        words.appendChild(row);
    });
    cell.appendChild(words);
    cell.appendChild(makePlot(item[3]));

    const name = document.createElement('div');
    name.className = 'cell-name';
    name.textContent = 'Component ' + item[0];
    cell.appendChild(name);

    const count = document.createElement('div');
    count.className = 'cell-name';
    count.textContent = item[1] + ' nodes';
    cell.appendChild(count);
    return cell;
}

const graph = document.getElementById('graph');
rows.forEach(function(items) {
    const row = document.createElement('div');
    row.className = 'graph-row';
    items.forEach(function(item) {
        row.appendChild(makeCell(item));
    });
    graph.appendChild(row);
});
```
